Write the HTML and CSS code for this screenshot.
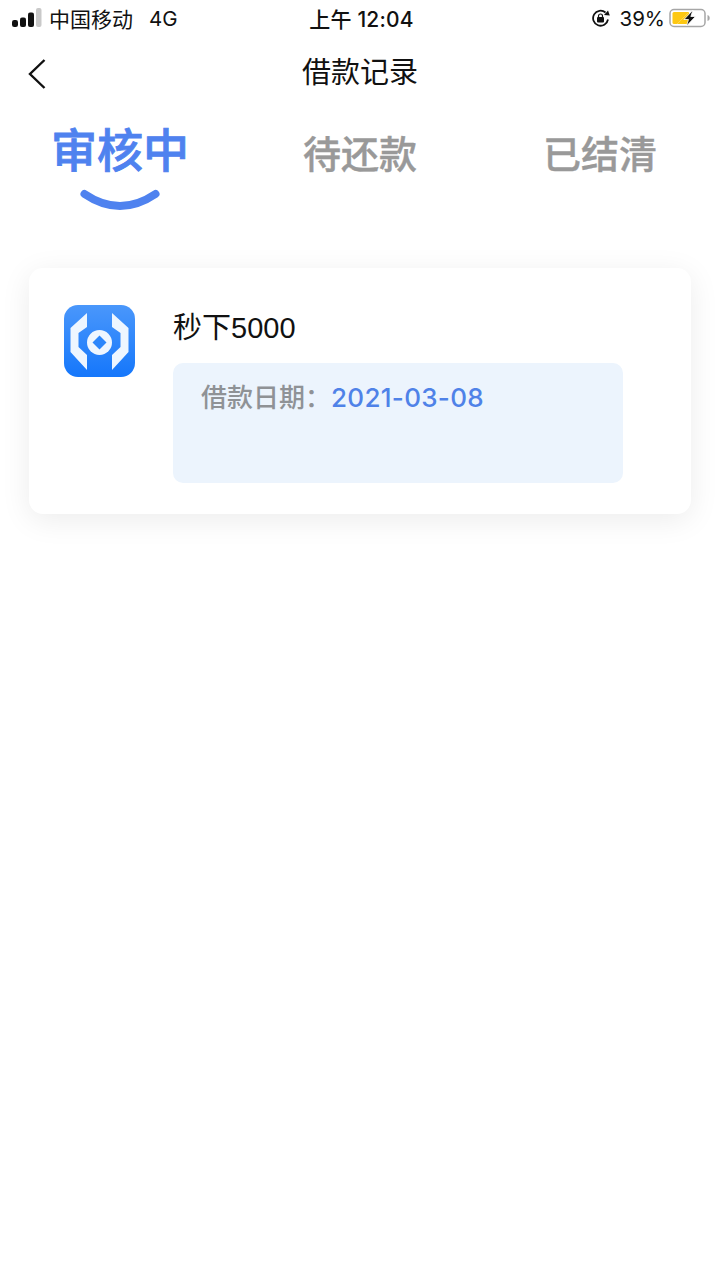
FILE: index.html
```html
<!DOCTYPE html>
<html>
    <head>
        <meta charset="UTF-8">
        <title>借款记录</title>
        <link rel="stylesheet" href="styles.css">
    </head>
    <body>
        <div class="statusBar">
            <div class="statusLeft">
                <svg class="signal" width="30" height="20" viewBox="0 0 30 20">
                    <rect x="0" y="12" width="6" height="7" rx="2.200" fill="#111"/>
                    <rect x="8" y="9.500" width="6" height="9.500" rx="2" fill="#111"/>
                    <rect x="16" y="4.500" width="6" height="14.500" rx="2" fill="#111"/>
                    <rect x="24" y="0" width="5.500" height="19" rx="2" fill="#c9c9c9"/>
                </svg>
                <span class="carrier">中国移动</span>
                <span class="network">4G</span>
            </div>
            <div class="statusTime">上午 12:04</div>
            <div class="statusRight">
                <svg class="lockIcon" width="20" height="18" viewBox="0 0 20 18">
                    <path d="M17 10.500A7.500 7.500 0 1 1 14.500 3.500" fill="none" stroke="#111" stroke-width="1.800"/>
                    <path d="M13 6L18.800 6.500L17 1.500Z" fill="#111"/>
                    <rect x="6" y="8" width="7" height="5.500" rx="1" fill="#111"/>
                    <path d="M7.500 8.500V7a2 2 0 0 1 4 0v1.500" fill="none" stroke="#111" stroke-width="1.200"/>
                </svg>
                <span class="percent">39%</span>
                <svg class="battery" width="42" height="20" viewBox="0 0 42 20">
                    <rect x="1" y="1.500" width="35" height="17" rx="4" fill="none" stroke="#a6a6a6" stroke-width="1.500"/>
                    <path d="M5 4H20L8 16H5Q3.500 16 3.500 14.500V5.500Q3.500 4 5 4Z" fill="#fdc813"/>
                    <path d="M8 16L20 4V16Z" fill="#fdc813"/>
                    <path d="M24 2L15 11.500H19.500L17.500 18L26.500 8.500H21.800Z" fill="#111" stroke="#fff" stroke-width="0.800"/>
                    <path d="M38.500 7v6c1.500-.5 2.200-1.500 2.200-3s-.7-2.500-2.200-3z" fill="#a6a6a6"/>
                </svg>
            </div>
        </div>

        <div class="navBar">
            <svg class="backIcon" width="20" height="32" viewBox="0 0 20 32">
                <path d="M17.500 2L3 16L17.500 30" fill="none" stroke="#111" stroke-width="2.400"/>
            </svg>
            <h1 class="navTitle">借款记录</h1>
        </div>

        <div class="tabs">
            <div class="tab active">
                <span>审核中</span>
                <svg class="smile" width="80" height="24" viewBox="0 0 80 24">
                    <path d="M4.500 5Q40 29 75.500 5" fill="none" stroke="#4f82ef" stroke-width="8" stroke-linecap="round"/>
                </svg>
            </div>
            <div class="tab"><span>待还款</span></div>
            <div class="tab"><span>已结清</span></div>
        </div>

        <div class="card">
            <svg class="appLogo" width="71" height="72" viewBox="0 0 71 72">
                <defs>
                    <linearGradient id="logoBg" x1="0" y1="0" x2="0" y2="1">
                        <stop offset="0" stop-color="#4a97fb"/>
                        <stop offset="1" stop-color="#1577fb"/>
                    </linearGradient>
                </defs>
                <rect width="71" height="72" rx="14" fill="url(#logoBg)"/>
                <path d="M23 8V22L14.500 28V42L23 50V65L6.500 47V23Z" fill="#eef6ff"/>
                <path d="M48 8V22L56.500 28V42L48 50V65L64.500 47V23Z" fill="#eef6ff"/>
                <circle cx="35.500" cy="37.500" r="12.500" fill="#eef6ff"/>
                <path d="M35.500 30.500L42.500 37.500L35.500 44.500L28.500 37.500Z" fill="#2c86fb"/>
            </svg>
            <div class="cardBody">
                <div class="productName">秒下5000</div>
                <div class="infoBox">
                    <span class="infoLabel">借款日期：</span><span class="infoDate">2021-03-08</span>
                </div>
            </div>
        </div>
    </body>
</html>
```

FILE: styles.css
```css
body {
    margin: 0;
    min-height: 100vh;
    background-color: white;
    color: #111;
    font-family: Inter, "Noto Sans CJK SC", sans-serif;
}
.statusBar {
    height: 36px;
    padding: 0 9px 0 12px;
    display: grid;
    grid-template-columns: 1fr auto 1fr;
    align-items: center;
    font-size: 20.500px;
}
.statusLeft {
    display: flex;
    align-items: center;
}
.signal {
    margin-right: 7px;
}
.carrier {
    margin-right: 16px;
    font-size: 21px;
}
.statusTime {
    font-size: 21px;
    font-weight: 500;
    letter-spacing: 0.2px;
}
.statusRight {
    display: flex;
    align-items: center;
    justify-content: flex-end;
}
.lockIcon {
    margin-right: 8px;
}
.percent {
    margin-right: 4px;
}
.navBar {
    height: 74px;
    display: flex;
    align-items: center;
    justify-content: center;
    position: relative;
}
.navTitle {
    margin: 0;
    font-size: 29px;
    line-height: 40px;
    font-weight: normal;
}
.backIcon {
    position: absolute;
    left: 27px;
    top: 22px;
}
.tabs {
    display: grid;
    grid-template-columns: repeat(3, 240px);
    height: 158px;
}
.tab {
    display: flex;
    flex-direction: column;
    align-items: center;
    padding-top: 21px;
    color: #999;
    font-size: 38px;
    line-height: 46px;
    font-weight: 500;
    -webkit-text-stroke: 0.4px #999;
}
.tab.active {
    padding-top: 17px;
    color: #4f82ef;
    font-size: 46px;
    line-height: 46px;
    -webkit-text-stroke: 0.8px #4f82ef;
}
.smile {
    margin-top: 16px;
}
.card {
    margin: 0 29px;
    height: 246px;
    box-sizing: border-box;
    padding: 37px 68px 31px 35px;
    background-color: white;
    border-radius: 14px;
    box-shadow: 0 6px 30px rgba(0, 0, 0, 0.08);
    display: flex;
}
.appLogo {
    flex-shrink: 0;
    margin-right: 38px;
}
.cardBody {
    flex: 1;
    padding-top: 2px;
}
.productName {
    font-family: "Liberation Sans", "Noto Sans CJK SC", sans-serif;
    font-size: 29px;
    line-height: 42px;
    margin-bottom: 14px;
}
.infoBox {
    height: 120px;
    box-sizing: border-box;
    padding: 17px 28px;
    background-color: #ecf4fd;
    border-radius: 10px;
    font-size: 26px;
    line-height: 36px;
}
.infoLabel {
    color: #8f9296;
    font-weight: 500;
}
.infoDate {
    color: #4f82e8;
    font-weight: 500;
    letter-spacing: 0.3px;
}
```
